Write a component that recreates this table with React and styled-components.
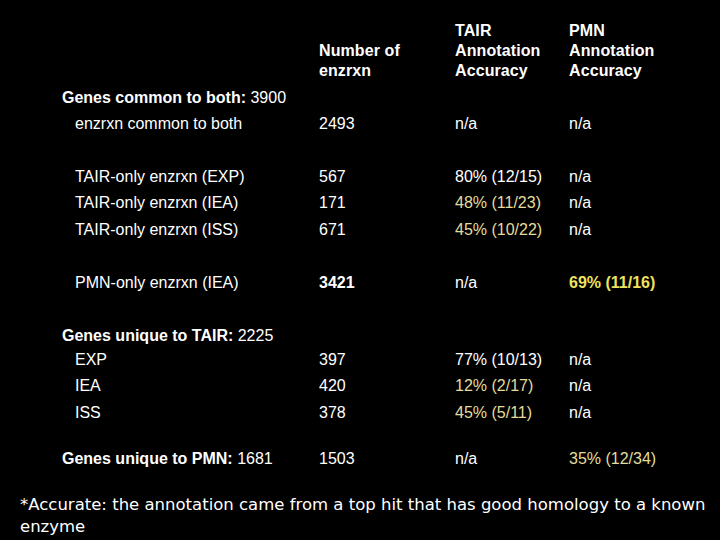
import React from 'react';
import styled, { createGlobalStyle } from 'styled-components';

const GlobalStyle = createGlobalStyle`
    html, body {
        margin: 0;
        padding: 0;
        background: #000;
    }
    body {
        font-family: 'Liberation Sans', Arial, sans-serif;
        color: #fff;
    }
`;

const Slide = styled.div`
    width: 720px;
    height: 540px;
    background: #000;
    padding-top: 21px;
    box-sizing: border-box;
    overflow: hidden;
`;

const Row = styled.div`
    display: grid;
    grid-template-columns: 62px 257px 136px 114px 1fr;
    align-items: ${p => (p.$header ? 'end' : 'center')};
    height: ${p => (p.$header ? 'auto' : '26px')};
    margin-top: ${p => p.$space || 0}px;
    font-size: 16px;
    line-height: 20px;
`;

const Cell = styled.div`
    grid-column: ${p => p.$col};
    padding-left: ${p => (p.$indent ? 13 : 0)}px;
    font-weight: ${p => (p.$bold ? 'bold' : 'normal')};
    color: ${p => p.$color || '#fff'};
    white-space: nowrap;
`;

const HeadCell = styled(Cell)`
    font-weight: bold;
    letter-spacing: 0.1px;
`;

const Bold = styled.span`
    font-weight: bold;
`;

const Footnote = styled.p`
    margin: ${p => p.$space}px 10px 0 20px;
    font-family: 'DejaVu Sans', sans-serif;
    font-size: 16.5px;
    line-height: 22px;
    color: #fff;
`;

const PALE = '#e4dc9c';
const GOLD = '#efe25c';

const rows = [
    { section: 'Genes common to both:', count: '3900', space: 4 },
    { label: 'enzrxn common to both', num: '2493', tair: 'n/a', pmn: 'n/a' },
    { label: 'TAIR-only enzrxn (EXP)', num: '567', tair: '80% (12/15)', pmn: 'n/a', space: 27 },
    { label: 'TAIR-only enzrxn (IEA)', num: '171', tair: '48% (11/23)', tairColor: PALE, pmn: 'n/a' },
    { label: 'TAIR-only enzrxn (ISS)', num: '671', tair: '45% (10/22)', tairColor: PALE, pmn: 'n/a', space: 1 },
    { label: 'PMN-only enzrxn (IEA)', num: '3421', numBold: true, tair: 'n/a', pmn: '69% (11/16)', pmnColor: GOLD, pmnBold: true, space: 27 },
    { section: 'Genes unique to TAIR:', count: '2225', space: 27 },
    { label: 'EXP', num: '397', tair: '77% (10/13)', pmn: 'n/a', space: -2 },
    { label: 'IEA', num: '420', tair: '12% (2/17)', tairColor: PALE, pmn: 'n/a' },
    { label: 'ISS', num: '378', tair: '45% (5/11)', tairColor: PALE, pmn: 'n/a', space: 1 },
    { section: 'Genes unique to PMN:', count: '1681', num: '1503', tair: 'n/a', pmn: '35% (12/34)', pmnColor: PALE, space: 20 },
];

export default function App() {
    return (
        <Slide>
            <GlobalStyle />
            <Row $header>
                <HeadCell $col={3}>Number of<br />enzrxn</HeadCell>
                <HeadCell $col={4}>TAIR<br />Annotation<br />Accuracy</HeadCell>
                <HeadCell $col={5}>PMN<br />Annotation<br />Accuracy</HeadCell>
            </Row>
            {rows.map((r, i) => (
                <Row key={i} $space={r.space}>
                    {r.section ? (
                        <Cell $col={2}>
                            <Bold>{r.section}</Bold> {r.count}
                        </Cell>
                    ) : (
                        <Cell $col={2} $indent>{r.label}</Cell>
                    )}
                    {r.num && <Cell $col={3} $bold={r.numBold}>{r.num}</Cell>}
                    {r.tair && <Cell $col={4} $color={r.tairColor}>{r.tair}</Cell>}
                    {r.pmn && <Cell $col={5} $color={r.pmnColor} $bold={r.pmnBold}>{r.pmn}</Cell>}
                </Row>
            ))}
            <Footnote $space={22}>
                *Accurate: the annotation came from a top hit that has good homology to a known enzyme
            </Footnote>
        </Slide>
    );
}
